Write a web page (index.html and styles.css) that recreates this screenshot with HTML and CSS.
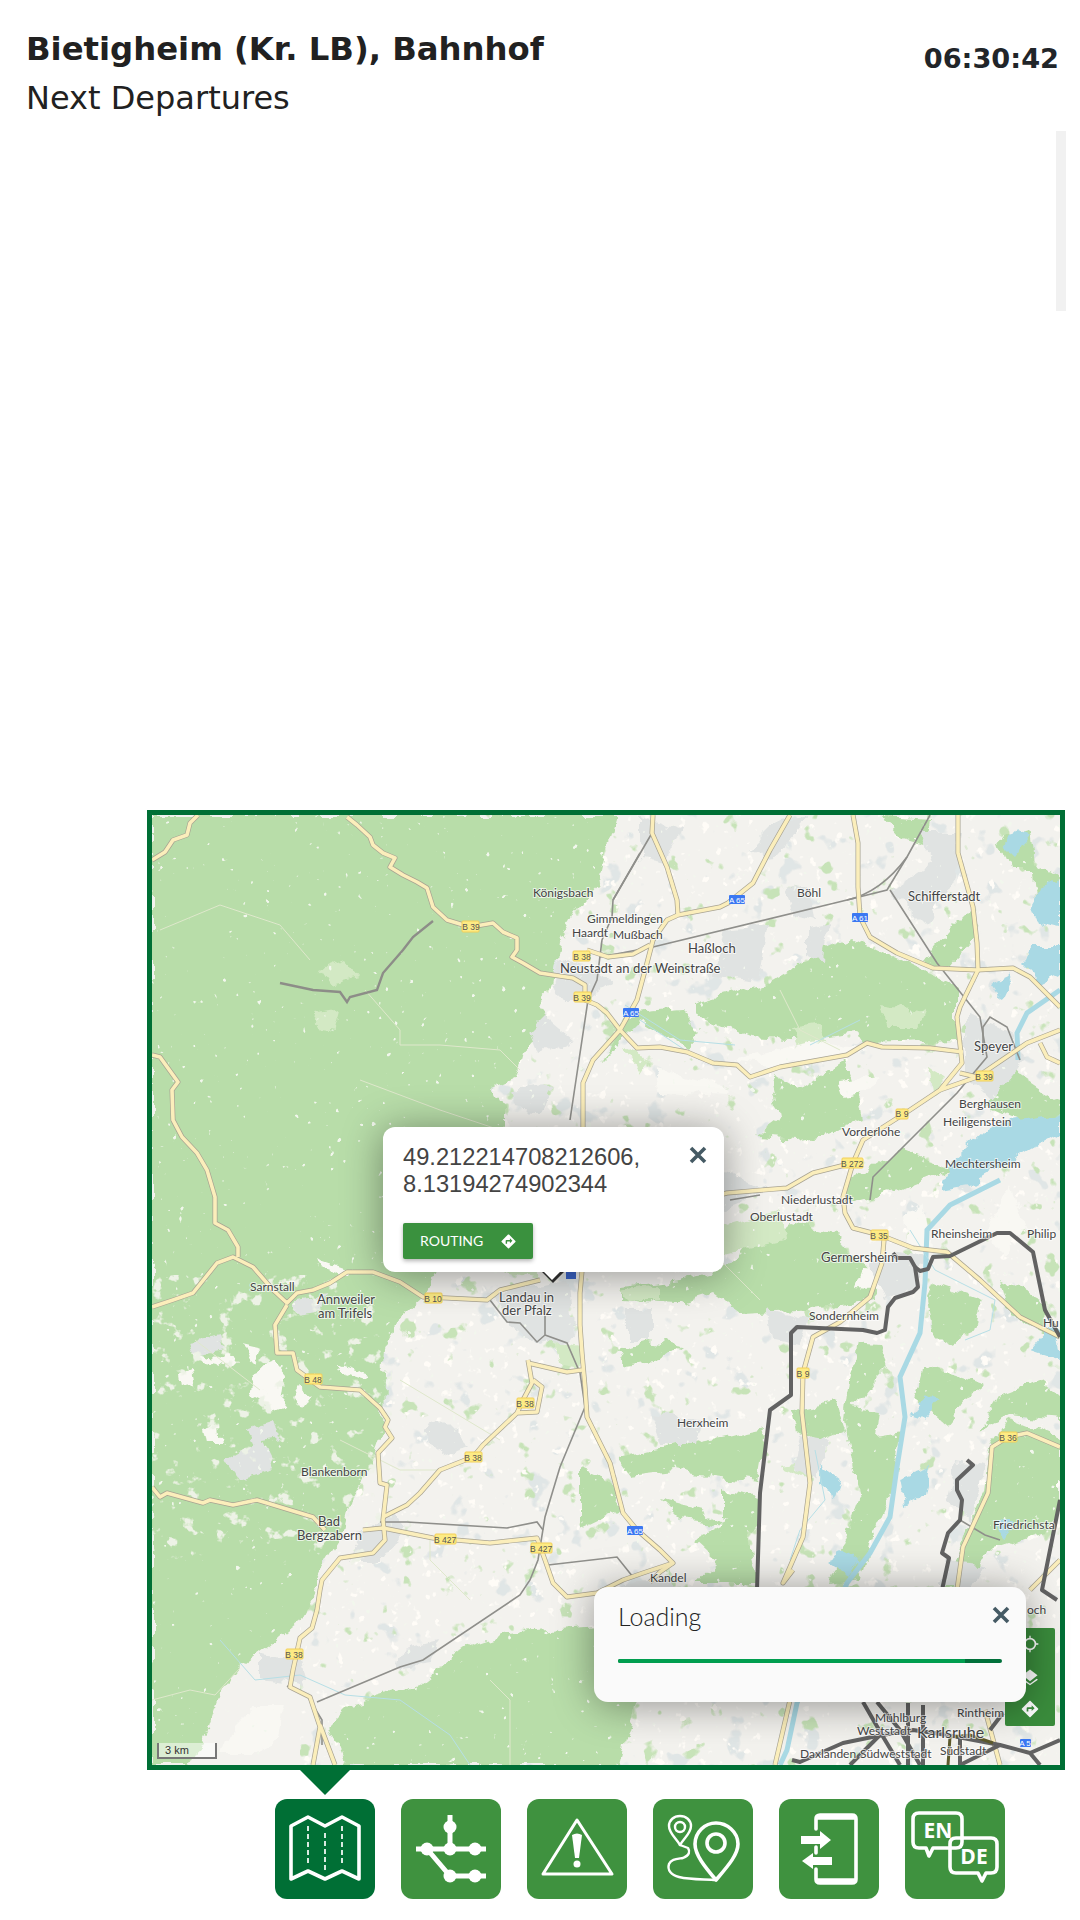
FILE: index.html
```html
<!DOCTYPE html>
<html lang="en">
<head>
    <meta charset="utf-8">
    <title>Bietigheim (Kr. LB), Bahnhof - Next Departures</title>
    <link rel="stylesheet" href="styles.css">
</head>
<body>
    <div class="page">
        <header class="header">
            <div>
                <h1>Bietigheim (Kr. LB), Bahnhof</h1>
                <p>Next Departures</p>
            </div>
            <div class="clock">06:30:42</div>
        </header>

        <div class="departures">
            <div class="scroll-track"></div>
        </div>

        <div class="map-frame">
            <svg class="map" viewBox="152 815 908 950" width="908" height="950">
                <defs>
                    <filter id="rough" x="-5%" y="-5%" width="110%" height="110%" color-interpolation-filters="sRGB">
                        <feTurbulence type="fractalNoise" baseFrequency="0.05" numOctaves="4" seed="7"/>
                        <feDisplacementMap in="SourceGraphic" scale="16" xChannelSelector="R" yChannelSelector="G"/>
                        <feGaussianBlur stdDeviation="0.4"/>
                    </filter>
                    <filter id="speck-white" x="0" y="0" width="1" height="1" color-interpolation-filters="sRGB">
                        <feTurbulence type="fractalNoise" baseFrequency="0.09" numOctaves="3" seed="4"/>
                        <feColorMatrix values="0 0 0 0 1 0 0 0 0 0.99 0 0 0 0 0.97 12 0 0 0 -8.1"/>
                    </filter>
                    <filter id="speck-sparse" x="0" y="0" width="1" height="1" color-interpolation-filters="sRGB">
                        <feTurbulence type="fractalNoise" baseFrequency="0.14" numOctaves="2" seed="9"/>
                        <feColorMatrix values="0 0 0 0 0.95 0 0 0 0 0.97 0 0 0 0 0.93 16 0 0 0 -12"/>
                    </filter>
                    <filter id="speck-dense" x="0" y="0" width="1" height="1" color-interpolation-filters="sRGB">
                        <feTurbulence type="fractalNoise" baseFrequency="0.055" numOctaves="4" seed="11"/>
                        <feColorMatrix values="0 0 0 0 0.93 0 0 0 0 0.95 0 0 0 0 0.9 12 0 0 0 -7.7"/>
                    </filter>
                    <filter id="speck-grey" x="0" y="0" width="1" height="1" color-interpolation-filters="sRGB">
                        <feTurbulence type="fractalNoise" baseFrequency="0.04" numOctaves="3" seed="21"/>
                        <feColorMatrix values="0 0 0 0 0.88 0 0 0 0 0.9 0 0 0 0 0.9 14 0 0 0 -9.2"/>
                    </filter>
                    <filter id="speck-field" x="0" y="0" width="1" height="1" color-interpolation-filters="sRGB">
                        <feTurbulence type="fractalNoise" baseFrequency="0.05" numOctaves="3" seed="33"/>
                        <feColorMatrix values="0 0 0 0 0.78 0 0 0 0 0.89 0 0 0 0 0.72 14 0 0 0 -9.6"/>
                    </filter>
                    <g id="roads">
                        <path d="M152 860L165 852L173 840L187 835L190 823L198 815"/>
                        <path d="M347 817L357 825L370 837L373 845L383 853L395 858L390 867L403 875L417 882L427 888L433 907L447 920L470 927L493 923L503 932L517 938L517 950L512 957L523 963L540 973L553 975L573 978L585 985L585 1000L597 1005L607 1013L620 1030L637 1048L660 1047L687 1052L713 1063L737 1065L750 1077L780 1067L847 1055L867 1043L882 1047L930 1048L963 1052"/>
                        <path d="M152 1055L160 1057L178 1082L172 1090L173 1120L182 1137L197 1153L207 1170L215 1197L215 1223L228 1230L238 1247L238 1257"/>
                        <path d="M152 1307L173 1300L193 1293L217 1263L233 1257L253 1267L273 1290L287 1303L297 1293L313 1290L330 1283L347 1272L373 1272L400 1282L423 1297L447 1298L487 1300L500 1290L540 1280"/>
                        <path d="M287 1305L275 1325L277 1353L293 1353L297 1370L320 1387L360 1390L380 1408L388 1420L385 1427L392 1438L378 1453L380 1483L387 1485L383 1520L385 1540L373 1553L340 1558L322 1580L320 1590L317 1610L312 1628L300 1638L293 1670L290 1687L310 1697L320 1727L313 1765"/>
                        <path d="M152 1487L160 1497L167 1493L203 1503L210 1500L233 1505L257 1500L313 1517L325 1530M363 1530L383 1528L433 1538L490 1543L537 1538L545 1560L553 1583L567 1597L597 1593L623 1580L643 1573L673 1563"/>
                        <path d="M790 815L770 850L753 883L728 903L720 907L678 915L667 920L653 940L647 963L637 1000L620 1030L593 1060L583 1083L583 1127L583 1260L580 1293L580 1325L582 1353L585 1387L587 1417L600 1443L610 1463L623 1513L637 1530L660 1550L673 1563L660 1572L650 1582"/>
                        <path d="M653 815L652 833L667 867L677 900L678 915"/>
                        <path d="M587 950L608 957L633 954L650 945"/>
                        <path d="M853 815L858 843L858 887L860 917L870 937L897 953L933 968L977 970L1013 968L1030 977L1060 1007"/>
                        <path d="M958 815L958 853L973 907L977 943L978 970L960 1007L957 1017L962 1063L940 1090L910 1110L863 1140L853 1163L843 1197L845 1213L853 1228L880 1235L913 1248L947 1252L980 1280L1020 1317L1060 1337"/>
                        <path d="M882 1263L870 1297L840 1322L813 1337L803 1373L802 1413L810 1483L803 1537L783 1583L793 1570"/>
                        <path d="M882 1263L884 1240M960 1073L977 1077L1027 1043L1060 1030M1040 1043L1047 1057L1060 1063M940 1090L977 1077"/>
                        <path d="M853 1163L813 1173L787 1188L727 1193L700 1200"/>
                        <path d="M1060 1447L1027 1433L1008 1437L992 1447L988 1493L963 1547L957 1590M1060 1560L1030 1590"/>
                        <path d="M528 1360L532 1383L523 1400L517 1413L483 1445L473 1457L440 1470L420 1493L407 1505L383 1517M528 1363L567 1372L582 1370M533 1380L542 1387L537 1412L517 1413"/>
                        <path d="M320 1725L335 1765M790 1700L775 1765M985 1710L1000 1765"/>
                    </g>
                </defs>

                <rect class="land" x="152" y="815" width="908" height="950"/>
                <rect x="300" y="815" width="760" height="950" filter="url(#speck-grey)"/>
                <rect x="300" y="815" width="760" height="950" filter="url(#speck-field)"/>
                <rect x="300" y="815" width="760" height="950" filter="url(#speck-white)"/>

                <g filter="url(#rough)">
                    <!-- forest -->
                    <path class="forest" d="M152 815H617L607 850L600 880L573 913L560 940L557 960L552 990L538 1005L547 1017L540 1033L523 1053L517 1077L493 1087L503 1107L503 1127L470 1200L423 1297L393 1325L393 1333L385 1350L383 1373L382 1433L370 1467L353 1497L345 1530L333 1550L317 1577L317 1590L303 1617L267 1647L240 1667L220 1693L207 1733L190 1765H152Z"/>
                    <path class="forest" d="M330 1727L352 1705L420 1685L470 1645L510 1632L600 1625L660 1630L640 1690L620 1765H345Z"/>
                    <path class="forest" d="M693 1003L767 983L827 947L850 937L913 967L957 987L957 1040L867 1043L853 1033L813 1040L747 1037L693 1013Z"/>
                    <path class="forest" d="M770 1073L800 1090L845 1060L860 1100L863 1120L813 1137L797 1140L757 1137L780 1120L775 1095Z"/>
                    <path class="forest" d="M747 1243L793 1223L840 1237L870 1273L873 1300L797 1310L740 1313L713 1293L680 1303L623 1300L623 1287L680 1280L730 1267Z"/>
                    <path class="forest" d="M617 1457L680 1445L767 1427L757 1483L700 1475L673 1470L630 1475Z"/>
                    <path class="forest" d="M580 1467L600 1475L622 1510L580 1530Z"/>
                    <path class="forest" d="M660 1500L700 1510L725 1525L680 1520Z"/>
                    <path class="forest" d="M693 1540L747 1513L757 1583H693L715 1560Z"/>
                    <path class="forest" d="M857 1343L880 1345L890 1365L870 1385L853 1407L880 1410L877 1437L900 1433L893 1490L873 1533L860 1580L830 1585L860 1500L845 1420L850 1380Z"/>
                    <path class="forest" d="M990 1450L1010 1420L1060 1440V1500L1047 1533L993 1550L960 1583L945 1590L965 1530L985 1490Z"/>
                    <path class="forest" d="M933 1283L983 1300L973 1333L945 1345L930 1330L925 1300Z"/>
                    <path class="forest" d="M1000 1280L1040 1300L1050 1335L1010 1315Z"/>
                    <path class="forest" d="M925 1365L985 1385L965 1400L945 1425L915 1400ZM980 1430L1000 1395L1040 1380L1060 1395V1420L1010 1415Z"/>
                    <path class="forest" d="M947 933L970 910L970 945L950 967L925 960Z"/>
                    <path class="forest" d="M880 817L933 820L930 845L895 835Z"/>
                    <path class="forest" d="M617 1350L650 1340L680 1345L660 1360L625 1365Z"/>
                    <path class="forest" d="M790 1410L835 1400L845 1430L820 1440L795 1430Z"/>
                    <path class="forest" d="M725 1490L760 1500L755 1530L725 1520ZM600 1610L650 1600L640 1618Z"/>
                    <path class="forest" d="M680 1010L700 1030L690 1050L640 1020L600 1060L625 1015Z"/>
                    <path class="forest" d="M1000 1060L1060 1100V1113L1020 1120L985 1105ZM900 1150L950 1170L900 1190L840 1205L850 1180Z"/>
                    <path class="forest" d="M1030 860L1060 880V895L1035 910ZM1000 840L1030 830L1035 870L1010 870Z"/>

                    <!-- pale patches -->
                    <path class="pale" d="M320 970L345 960L360 978L330 985ZM310 1015L340 1010L335 1030L320 1028ZM880 1005L925 1012L920 1025L890 1025Z"/>
                    <path class="pale" d="M790 1030L820 1025L830 1045L800 1050ZM925 1065L945 1080L930 1095ZM625 1050L650 1060L640 1075ZM490 1200L540 1280L500 1270Z"/>
                    <path class="pale" d="M695 1235L780 1210L785 1240L720 1255ZM555 1340L580 1345L585 1370L560 1365ZM780 1465L820 1460L810 1480ZM620 1290L660 1285L660 1300L630 1300Z"/>
                    <path class="white" d="M252 1370L272 1362L286 1378L282 1408L268 1414L260 1398L248 1392ZM193 1352L240 1362L235 1367L195 1358ZM315 1258L350 1270L345 1276L322 1268Z"/>
                    <path class="white" d="M178 1375L192 1370L195 1385L180 1388ZM205 1430L220 1425L222 1445L208 1445ZM240 1345L262 1350L255 1360ZM300 1385L312 1395L300 1410L292 1398ZM340 1365L370 1375L365 1380L340 1372Z"/>
                    <path class="white" d="M815 1040L870 1050L780 1066L730 1060ZM655 1070L720 1085L730 1095L660 1092ZM840 1080L880 1075L870 1090L845 1095Z"/>
                    <path class="white" d="M905 1215L925 1205L930 1250L910 1270ZM1012 1185L1025 1225L1005 1255L985 1235ZM862 1270L900 1272L892 1290L855 1288Z"/>
                    <path class="white" d="M255 1705L285 1705L278 1735L260 1755L222 1755L232 1728Z"/>

                    <!-- built-up -->
                    <path class="urban" d="M560 960L595 965L610 985L590 1000L565 1000L555 985ZM545 1015L575 1040L540 1055L530 1030ZM510 1090L555 1085L540 1110L515 1108Z"/>
                    <path class="urban" d="M490 1290L545 1285L570 1280L575 1340L540 1345L510 1325ZM423 1430L445 1420L470 1445L440 1455ZM190 1340L220 1335L225 1350L195 1355ZM245 1430L275 1420L280 1440L250 1445Z"/>
                    <path class="urban" d="M640 815L680 830L665 865L640 860ZM780 820L810 815L770 860L750 850ZM785 890L810 885L815 920L795 915ZM725 930L770 925L760 980L715 975ZM805 930L830 925L825 960L805 955ZM920 830L960 830L955 875L925 925L890 890L935 860Z"/>
                    <path class="urban" d="M965 1015L1010 1030L1025 1060L990 1100L965 1075ZM700 1160L770 1190L720 1210L690 1190Z"/>
                    <path class="urban" d="M900 1250L925 1255L915 1290L885 1300L870 1265ZM770 1310L810 1320L800 1345L775 1340ZM628 1310L650 1310L650 1340L628 1340Z"/>
                    <path class="urban" d="M650 1415L700 1420L695 1445L660 1445ZM800 1435L830 1440L815 1480L795 1470ZM955 1460L985 1465L970 1520L945 1500ZM945 1560L985 1565L975 1585L940 1585Z"/>
                    <path class="urban" d="M295 1300L325 1295L318 1312L295 1315ZM225 1460L260 1440L275 1470L240 1480ZM360 1530L395 1515L405 1530L385 1560L350 1560ZM260 1655L300 1660L305 1685L260 1680Z"/>
                    <path class="urban" d="M620 1585L670 1575L680 1590L620 1610ZM400 1650L440 1640L430 1665L395 1670ZM530 1295L560 1305L560 1335L530 1325Z"/>
                </g>

                <rect x="152" y="1275" width="240" height="290" filter="url(#speck-dense)"/>
                <rect x="152" y="815" width="908" height="950" filter="url(#speck-sparse)"/>

                <!-- water -->
                <g filter="url(#rough)">
                    <path class="water" d="M1060 880L1040 888L1030 905L1038 925L1060 930ZM1060 945L1035 945L1020 965L1040 985L1060 975ZM1015 855L1030 835L1015 830L1005 845Z"/>
                    <path class="water" d="M947 1167L983 1133L1010 1120L1060 1113V1133L1005 1165L970 1185L940 1190ZM1000 1000L990 985L1012 975ZM1055 1320L1060 1360L1030 1350Z"/>
                    <path class="water" d="M900 1480L930 1470L925 1495L905 1505ZM910 1415L925 1395L940 1400L925 1420ZM820 1465L840 1480L835 1495L820 1485ZM840 1550L860 1560L850 1575L825 1560ZM995 1520L1015 1520L1005 1540Z"/>
                </g>
                <path class="river" d="M1060 990L1027 1013L1017 1033L1018 1060"/>
                <path class="river" d="M1000 1180L950 1205L927 1230L925 1283L920 1333L900 1377L905 1417L897 1467L890 1517L870 1553L847 1583L797 1703L787 1750L780 1765"/>
                <path class="brook" d="M625 1005L680 1040L735 1045M810 1045L860 1020M640 1020L700 1060M910 1230L935 1270L995 1300L990 1330L965 1340M815 1450L825 1500L800 1530L790 1560M220 1640L255 1680L300 1675L345 1695L400 1700L450 1735L470 1765"/>
                <path class="trail" d="M152 1700L190 1690L215 1695L240 1668M160 930L220 905L280 925L310 960M365 990L400 1030L400 1045L440 1045L500 1050L520 1070M360 1080L440 1110L500 1130M195 1340L260 1390M400 1380L500 1440M340 1440L400 1470L440 1470M490 1680L510 1700L510 1765M470 1600L430 1560L430 1540M700 1200L720 1260L760 1300M780 990L800 1030L840 1050"/>

                <!-- roads and railway -->
                <g class="rail">
                    <path d="M640 853L613 900L612 917L602 940L597 980L588 1000L570 1120"/>
                    <path d="M652 833L613 900M600 957L653 947L847 900L887 890L907 857L930 815"/>
                    <path d="M847 900C870 895 890 880 907 857M890 890L937 963L980 1017L987 1057L957 1093L873 1177L870 1200"/>
                    <path d="M983 1055L983 1027L990 1017L1007 1027L1020 1060"/>
                    <path d="M490 1300L507 1322L520 1323L537 1342L545 1335L545 1307M545 1335L567 1343L580 1373L585 1407L560 1467L545 1517L538 1560L530 1580L520 1595L423 1660L400 1667L317 1702"/>
                    <path d="M380 1522L407 1522L507 1528L537 1522L543 1530M548 1565L617 1557L633 1577"/>
                    <path d="M287 1686L308 1697L322 1720L322 1745M960 1520L985 1535L1000 1540M730 1200L760 1195"/>
                </g>
                <path class="hill-road" d="M433 921L413 937L403 950L383 973L377 990L350 997L347 1002L340 992L313 990L280 983"/>
                <use href="#roads" class="road-case"/>
                <use href="#roads" class="road-fill"/>

                <!-- transit lines -->
                <g class="line">
                    <path d="M893 1253L897 1258L910 1258L915 1267L918 1287L913 1292L895 1298L888 1307L885 1330L877 1333L863 1330L797 1327L791 1333L791 1395L770 1410L760 1493L757 1590"/>
                    <path d="M915 1267L920 1271L928 1269L933 1257L950 1256L997 1233L1010 1233L1033 1252L1045 1310L1060 1337"/>
                    <path d="M967 1460L973 1465L957 1480L957 1490L962 1500L960 1520L948 1533L942 1553L949 1558L942 1590"/>
                    <path d="M1060 1500L1042 1590L1057 1600"/>
                    <path d="M792 1760L800 1762L843 1743L882 1735L913 1730L947 1735L1000 1745L1030 1753L1040 1765M1030 1753L1060 1740"/>
                    <path d="M863 1702L882 1735L900 1765M877 1702L900 1730L920 1765M908 1703V1765M923 1705V1765M960 1737V1765M990 1730L1003 1713M880 1735L850 1765M1000 1745L960 1765"/>
                </g>
                <path class="line-olive" d="M948 1765L950 1737L970 1735L993 1743"/>

                <!-- shields -->
                <g class="shield"><rect x="462" y="921" width="17" height="11"/><text x="471" y="930">B 39</text></g>
                <g class="shield"><rect x="573" y="951" width="17" height="10"/><text x="582" y="960">B 38</text></g>
                <g class="shield"><rect x="574" y="992" width="17" height="10"/><text x="582" y="1001">B 39</text></g>
                <g class="shield"><rect x="976" y="1071" width="17" height="10"/><text x="984" y="1080">B 39</text></g>
                <g class="shield"><rect x="896" y="1109" width="12" height="10"/><text x="902" y="1117">B 9</text></g>
                <g class="shield"><rect x="842" y="1158" width="21" height="10"/><text x="852" y="1167">B 272</text></g>
                <g class="shield"><rect x="871" y="1230" width="17" height="10"/><text x="879" y="1239">B 35</text></g>
                <g class="shield"><rect x="425" y="1293" width="17" height="10"/><text x="433" y="1302">B 10</text></g>
                <g class="shield"><rect x="305" y="1374" width="17" height="10"/><text x="313" y="1383">B 48</text></g>
                <g class="shield"><rect x="517" y="1398" width="17" height="10"/><text x="525" y="1407">B 38</text></g>
                <g class="shield"><rect x="465" y="1452" width="17" height="10"/><text x="473" y="1461">B 38</text></g>
                <g class="shield"><rect x="435" y="1534" width="21" height="10"/><text x="445" y="1543">B 427</text></g>
                <g class="shield"><rect x="531" y="1543" width="21" height="10"/><text x="541" y="1552">B 427</text></g>
                <g class="shield"><rect x="797" y="1368" width="12" height="10"/><text x="803" y="1377">B 9</text></g>
                <g class="shield"><rect x="1000" y="1432" width="17" height="10"/><text x="1008" y="1441">B 36</text></g>
                <g class="shield"><rect x="286" y="1649" width="17" height="10"/><text x="294" y="1658">B 38</text></g>

                <g class="shield-blue"><rect x="623" y="1008" width="16" height="9"/><text x="631" y="1016">A 65</text></g>
                <g class="shield-blue"><rect x="729" y="895" width="16" height="9"/><text x="737" y="903">A 65</text></g>
                <g class="shield-blue"><rect x="852" y="913" width="16" height="9"/><text x="860" y="921">A 61</text></g>
                <g class="shield-blue"><rect x="627" y="1526" width="16" height="9"/><text x="635" y="1534">A 65</text></g>
                <g class="shield-blue"><rect x="1020" y="1739" width="11" height="8"/><text x="1025" y="1746">A 5</text></g>
                <rect class="shield-stub" x="566" y="1270" width="10" height="9"/>

                <!-- places -->
                <g class="place">
                    <text x="533" y="897">Königsbach</text>
                    <text x="587" y="923">Gimmeldingen</text>
                    <text x="572" y="937">Haardt</text>
                    <text x="613" y="939">Mußbach</text>
                    <text x="688" y="953" class="place-big">Haßloch</text>
                    <text x="797" y="897">Böhl</text>
                    <text x="908" y="901" class="place-big">Schifferstadt</text>
                    <text x="560" y="973" class="place-big">Neustadt an der Weinstraße</text>
                    <text x="974" y="1051" class="place-big">Speyer</text>
                    <text x="959" y="1108">Berghausen</text>
                    <text x="943" y="1126">Heiligenstein</text>
                    <text x="945" y="1168">Mechtersheim</text>
                    <text x="842" y="1136">Vorderlohe</text>
                    <text x="781" y="1204">Niederlustadt</text>
                    <text x="750" y="1221">Oberlustadt</text>
                    <text x="931" y="1238">Rheinsheim</text>
                    <text x="1027" y="1238">Philip</text>
                    <text x="821" y="1262" class="place-big">Germersheim</text>
                    <text x="809" y="1320">Sondernheim</text>
                    <text x="677" y="1427">Herxheim</text>
                    <text x="993" y="1529">Friedrichsta</text>
                    <text x="650" y="1582">Kandel</text>
                    <text x="1027" y="1614">och</text>
                    <text x="1043" y="1327">Hu</text>
                    <text x="250" y="1291">Sarnstall</text>
                    <text x="317" y="1304" class="place-big">Annweiler</text>
                    <text x="318" y="1318" class="place-big">am Trifels</text>
                    <text x="499" y="1302" class="place-big">Landau in</text>
                    <text x="502" y="1315" class="place-big">der Pfalz</text>
                    <text x="301" y="1476">Blankenborn</text>
                    <text x="318" y="1526" class="place-big">Bad</text>
                    <text x="297" y="1540" class="place-big">Bergzabern</text>
                    <text x="875" y="1722">Mühlburg</text>
                    <text x="857" y="1735">Weststadt</text>
                    <text x="917" y="1738" class="place-city">Karlsruhe</text>
                    <text x="800" y="1758">Daxlanden</text>
                    <text x="860" y="1758">Südweststadt</text>
                    <text x="940" y="1755">Südstadt</text>
                    <text x="957" y="1717">Rintheim</text>
                </g>

                <path class="marker" d="M542 1272H564L553 1283Z"/>
            </svg>

            <div class="scale">3 km</div>

            <div class="map-tools">
                <div class="map-tool">
                    <svg viewBox="0 0 24 24" width="20" height="20"><circle cx="12" cy="12" r="6.5" fill="none" stroke="#fff" stroke-width="2"/><path d="M12 2v4M12 18v4M2 12h4M18 12h4" stroke="#fff" stroke-width="1.6"/></svg>
                </div>
                <div class="map-tool">
                    <svg viewBox="0 0 24 24" width="20" height="20"><path d="M12 3L21 10L12 17L3 10Z" fill="#fff"/><path d="M4 14L12 20L20 14L21.5 15.2L12 22L2.5 15.2Z" fill="#fff"/></svg>
                </div>
                <div class="map-tool">
                    <svg viewBox="0 0 24 24" width="20" height="20"><path fill="#fff" d="M21.71 11.29l-9-9c-.39-.39-1.02-.39-1.41 0l-9 9c-.39.39-.39 1.02 0 1.41l9 9c.39.39 1.02.39 1.41 0l9-9c.39-.38.39-1.01 0-1.41zM14 14.5V12h-4v3H8v-4c0-.55.45-1 1-1h5V7.5l3.5 3.5-3.5 3.5z"/></svg>
                </div>
            </div>

            <div class="popup">
                <svg class="close" viewBox="0 0 18 18" width="18" height="18"><path d="M2 2L16 16M16 2L2 16"/></svg>
                <div class="popup-text">49.212214708212606,<br>8.13194274902344</div>
                <a class="routing">
                    <span class="routing-label">ROUTING</span>
                    <svg viewBox="0 0 24 24" width="17" height="17"><path fill="#fff" d="M21.71 11.29l-9-9c-.39-.39-1.02-.39-1.41 0l-9 9c-.39.39-.39 1.02 0 1.41l9 9c.39.39 1.02.39 1.41 0l9-9c.39-.38.39-1.01 0-1.41zM14 14.5V12h-4v3H8v-4c0-.55.45-1 1-1h5V7.5l3.5 3.5-3.5 3.5z"/></svg>
                </a>
                <div class="popup-tip"></div>
            </div>

            <div class="loading">
                <svg class="close" viewBox="0 0 18 18" width="18" height="18"><path d="M2 2L16 16M16 2L2 16"/></svg>
                <div class="loading-title">Loading</div>
                <div class="progress"><div class="progress-value" style="width: 90.4%"></div></div>
            </div>

            <div class="frame-arrow"></div>
        </div>

        <nav class="nav">
            <div class="nav-btn active">
                <svg viewBox="0 0 100 100">
                    <path class="ico" d="M16 27L33 18L50 27L67 18L84 27V80L67 72L50 80L33 72L16 80Z"/>
                    <path class="ico-dash" d="M33 27V66M50 34V72M67 27V66"/>
                </svg>
            </div>
            <div class="nav-btn">
                <svg viewBox="0 0 100 100">
                    <path class="ico" d="M49 16V50M15 50H85M26 50L49 77H85"/>
                    <circle class="dot" cx="49" cy="28" r="6.5"/><circle class="dot" cx="26" cy="50" r="6.5"/><circle class="dot" cx="49" cy="50" r="6.5"/><circle class="dot" cx="74" cy="50" r="6.5"/><circle class="dot" cx="49" cy="77" r="6.5"/><circle class="dot" cx="74" cy="77" r="6.5"/>
                </svg>
            </div>
            <div class="nav-btn">
                <svg viewBox="0 0 100 100">
                    <path class="ico ico-warn" d="M50 21L85 75H16Z"/>
                    <path class="dot" d="M45 36Q50 33 55 36L52 59H48Z"/><circle class="dot" cx="50" cy="65" r="3.5"/>
                </svg>
            </div>
            <div class="nav-btn">
                <svg viewBox="0 0 100 100">
                    <path class="ico ico-thin" d="M27 46C22 38 16 34 16 27C16 21 21 17 27 17C33 17 38 21 38 27C38 34 32 38 27 46Z"/>
                    <circle class="ico ico-thin" cx="27" cy="28" r="5"/>
                    <path class="ico" d="M63 81C52 68 42 56 42 45C42 33 52 24 63 24C74 24 85 33 85 45C85 56 74 68 63 81Z"/>
                    <circle class="ico" cx="63" cy="44" r="9"/>
                    <path class="ico ico-thin" d="M27 46L35 49C37 52 37 56 30 59C24 60 18 60 16 65C14 71 18 76 26 78C38 81 52 80 63 81"/>
                </svg>
            </div>
            <div class="nav-btn">
                <svg viewBox="0 0 100 100">
                    <path class="ico" d="M37 30V20Q37 16 41 16H73Q77 16 77 20V80Q77 84 73 84H41Q37 84 37 80V70M37 48V54M37 19H77M37 81H77"/>
                    <path class="dot" d="M22 37H41V32L52 41L41 50V45H22Z"/>
                    <path class="dot" d="M53 58H34V54L23 62L34 70V66H53Z"/>
                </svg>
            </div>
            <div class="nav-btn">
                <svg viewBox="0 0 100 100">
                    <path class="ico" d="M14 14H51Q57 14 57 20V43Q57 49 51 49H28L24 57L21 49H14Q8 49 8 43V20Q8 14 14 14Z"/>
                    <path class="ico" d="M51 39H86Q92 39 92 45V68Q92 74 86 74H81L77 82L73 74H51Q45 74 45 68V45Q45 39 51 39Z"/>
                    <text class="ico-text" x="33" y="39">EN</text>
                    <text class="ico-text" x="69" y="65">DE</text>
                </svg>
            </div>
        </nav>
    </div>
</body>
</html>
```

FILE: styles.css
```css
body {
    margin: 0;
    background-color: #fff;
    font-family: "DejaVu Sans", sans-serif;
}
.page {
    width: 1080px;
    height: 1920px;
    overflow: hidden;
}
.header {
    display: flex;
    justify-content: space-between;
    box-sizing: border-box;
    height: 131px;
    padding: 25px 21px 0 26px;
}
.header h1 {
    margin: 0;
    font-size: 32.3px;
    line-height: 48px;
    font-weight: 700;
    color: #212121;
}
.header p {
    margin: 0;
    font-size: 32px;
    line-height: 50px;
    color: #212121;
}
.clock {
    margin-top: 15px;
    font-size: 27.2px;
    line-height: 38px;
    font-weight: 700;
    color: #212529;
}
.departures {
    display: flex;
    justify-content: flex-end;
    height: 679px;
    width: 1066px;
}
.scroll-track {
    width: 10px;
    height: 180px;
    background-color: #f1f1f1;
}

/* map */
.map-frame {
    position: relative;
    width: 908px;
    height: 950px;
    margin-left: 147px;
    border: 5px solid #006f35;
}
.map {
    display: block;
}
.land { fill: #f3f2ee; }
.forest { fill: #b8dda9; }
.pale { fill: #d3e9c4; }
.white { fill: #f9f8f3; }
.urban { fill: #e0e3e2; }
.water { fill: #a9d9e4; }
.river { fill: none; stroke: #a9d9e4; stroke-width: 5; }
.brook { fill: none; stroke: #b6dfe6; stroke-width: 1; }
.trail { fill: none; stroke: #dfe8cc; stroke-width: 1; }
.rail path { fill: none; stroke: #8f8f8b; stroke-width: 1.6; }
.hill-road { fill: none; stroke: #8d8d88; stroke-width: 2.4; }
.road-case { fill: none; stroke: #a8a392; stroke-width: 5; stroke-linejoin: round; }
.road-fill { fill: none; stroke: #fbeebb; stroke-width: 3.6; stroke-linejoin: round; }
.line path { fill: none; stroke: #626262; stroke-width: 4; stroke-linejoin: round; }
.line-olive { fill: none; stroke: #5d5a2c; stroke-width: 3; }
.shield rect { fill: #fdeb84; stroke: #f2cf58; stroke-width: 1; rx: 1; }
.shield text {
    font-family: "Liberation Sans", sans-serif;
    font-size: 8.5px;
    text-anchor: middle;
    fill: #555;
}
.shield-blue rect { fill: #3b78f2; rx: 1; }
.shield-blue text {
    font-family: "Liberation Sans", sans-serif;
    font-size: 8px;
    text-anchor: middle;
    fill: #fff;
}
.shield-stub { fill: #3b64c8; }
.place text {
    font-family: Lato, sans-serif;
    font-size: 12px;
    fill: #444;
    paint-order: stroke;
    stroke: rgba(255, 255, 255, 0.7);
    stroke-width: 2px;
}
.place .place-big {
    font-size: 13px;
}
.place .place-city {
    font-size: 16px;
}
.marker { fill: #333; }

.scale {
    position: absolute;
    left: 5px;
    bottom: 6px;
    box-sizing: border-box;
    width: 60px;
    height: 16px;
    padding-left: 6px;
    border: 2px solid #777;
    border-top: none;
    background-color: rgba(255, 255, 255, 0.5);
    font-family: "Liberation Sans", sans-serif;
    font-size: 11px;
    line-height: 14px;
    color: #333;
}
.map-tools {
    position: absolute;
    right: 5px;
    top: 813px;
    width: 50px;
    background-color: #3a8c3c;
    border-radius: 2px;
}
.map-tool {
    display: flex;
    justify-content: center;
    align-items: center;
    height: 32.5px;
}
.popup {
    position: absolute;
    left: 231px;
    top: 312px;
    box-sizing: border-box;
    width: 341px;
    height: 145px;
    padding: 17px 20px;
    background-color: #fff;
    border-radius: 12px;
    box-shadow: 0 3px 40px rgba(0, 0, 0, 0.4);
}
.popup-text {
    font-family: "Liberation Sans", sans-serif;
    font-size: 23.7px;
    line-height: 26.5px;
    color: #444;
}
.routing {
    display: flex;
    align-items: center;
    gap: 17px;
    box-sizing: border-box;
    width: 130px;
    height: 36px;
    margin-top: 26px;
    padding-left: 17px;
    background-color: #3a913e;
    border-radius: 2px;
    box-shadow: 0 2px 4px rgba(0, 0, 0, 0.3);
    font-family: Lato, sans-serif;
    font-size: 14px;
    color: #fff;
}
.routing-label {
    margin-top: -2px;
}
.popup-tip {
    position: absolute;
    left: 161px;
    bottom: -8px;
    width: 16px;
    height: 16px;
    background-color: #fff;
    transform: rotate(45deg) scale(0.7);
}
.close {
    position: absolute;
    right: 17px;
    top: 19px;
}
.close path {
    fill: none;
    stroke: #455a64;
    stroke-width: 3.6;
}
.loading {
    position: absolute;
    left: 442px;
    top: 772px;
    box-sizing: border-box;
    width: 432px;
    height: 115px;
    padding: 14px 24px;
    background-color: #fafafa;
    border-radius: 14px;
    box-shadow: 0 3px 40px rgba(0, 0, 0, 0.4);
}
.loading .close {
    right: 16px;
}
.loading-title {
    font-family: Lato, sans-serif;
    font-size: 25px;
    line-height: 30px;
    font-weight: 300;
    color: #222;
}
.progress {
    width: 384px;
    height: 4px;
    margin-top: 28px;
    background-color: #00703a;
    border-radius: 2px;
    overflow: hidden;
}
.progress-value {
    height: 100%;
    background-color: #009e4f;
}
.frame-arrow {
    position: absolute;
    left: 148px;
    bottom: -30px;
    width: 0;
    height: 0;
    border-left: 25px solid transparent;
    border-right: 25px solid transparent;
    border-top: 25px solid #006f35;
}

/* bottom buttons */
.nav {
    display: flex;
    gap: 26px;
    padding: 29px 0 0 275px;
}
.nav-btn {
    width: 100px;
    height: 100px;
    background-color: #3f923f;
    border-radius: 12px;
}
.nav-btn.active {
    background-color: #006f35;
}
.nav-btn svg {
    display: block;
    width: 100px;
    height: 100px;
}
.ico {
    fill: none;
    stroke: #fff;
    stroke-width: 3.6;
    stroke-linejoin: round;
    stroke-linecap: round;
}
.nav-btn:nth-child(2) .ico {
    stroke-width: 5;
    stroke-linecap: butt;
}
.ico-thin {
    stroke-width: 2.4;
}
.ico-warn {
    stroke-width: 3;
}
.ico-dash {
    fill: none;
    stroke: #fff;
    stroke-width: 1.7;
    stroke-dasharray: 5 3;
}
.dot {
    fill: #fff;
}
.ico-text {
    font-family: "Open Sans", sans-serif;
    font-size: 21px;
    font-weight: 700;
    text-anchor: middle;
    fill: #fff;
}
```
